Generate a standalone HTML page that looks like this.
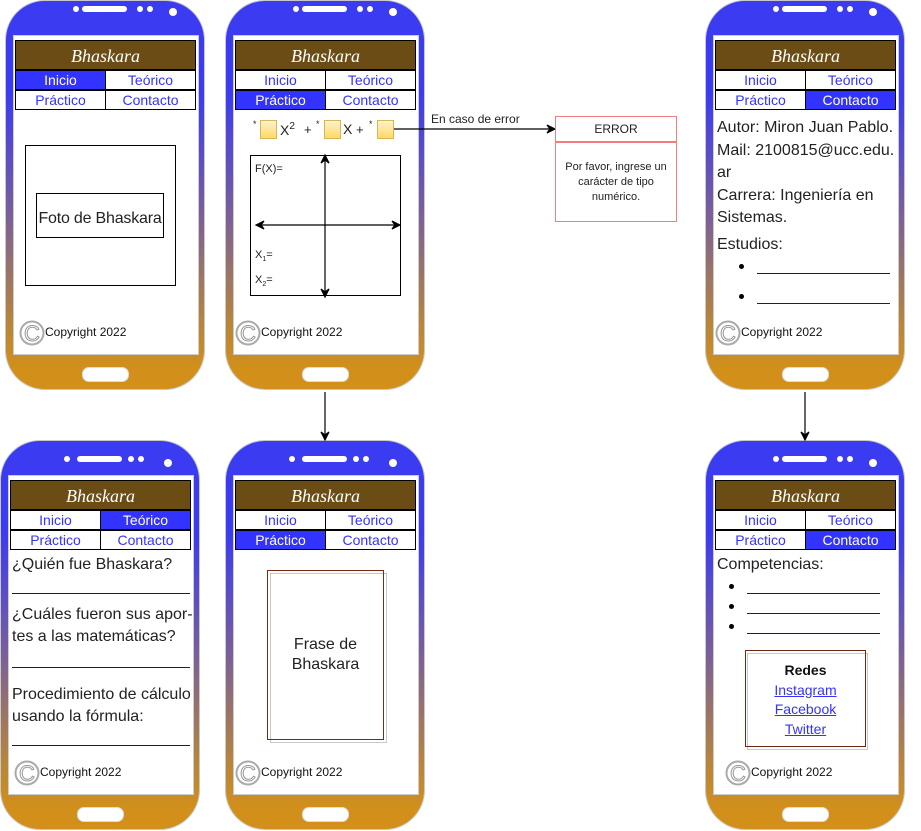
<!DOCTYPE html>
<html><head><meta charset="utf-8"><style>
*{margin:0;padding:0;box-sizing:border-box}
body{width:921px;height:831px;background:#fff;position:relative;overflow:hidden;font-family:"Liberation Sans",sans-serif;color:#222}
.ph{position:absolute;width:200px;height:390px}
.bd{position:absolute;left:0;top:0;width:200px;height:390px;border-radius:40px;border:1px solid #c8c8c8;background:linear-gradient(#3b3bf2 0%,#3b3bf2 24%,#7a5f9a 55%,#b5843e 82%,#d2901a 95%)}
.spk{position:absolute;left:77px;top:6px;width:45px;height:6px;border-radius:3px;background:#fff}
.dot{position:absolute;width:6px;height:6px;border-radius:50%;background:#fff}
.cam{position:absolute;left:164px;top:8px;width:8px;height:8px;border-radius:50%;background:#fff}
.scr{position:absolute;left:8px;top:35px;width:186px;height:320px;background:#fff;border:1px solid #ccc}
.home{position:absolute;left:77px;top:367px;width:47px;height:15px;border-radius:7px;background:#fff;border:1px solid #ddd}
.hd{position:absolute;left:10px;top:40px;width:181px;height:30px;background:#6b4c14;border:1px solid #000;color:#fff;font-family:"Liberation Serif",serif;font-style:italic;font-size:18px;text-align:center;line-height:30px}
.nv{position:absolute;height:20px;width:91px;border:1px solid #000;font-size:14px;line-height:18px;text-align:center;color:#3333ff;background:#fff}
.nv.a{background:#3333ff;color:#fff}
.cp{position:absolute;left:14px;top:319px;font-size:12px;line-height:26px;color:#111}
.cp svg{vertical-align:middle}
.t{position:absolute;font-size:16px;color:#222;white-space:nowrap}
.ln{position:absolute;height:1px;background:#222}
.bu{position:absolute;width:5px;height:5px;border-radius:50%;background:#000}
</style></head><body>

<div class="ph" style="left:5px;top:0">
<div class="bd"></div><div class="dot" style="left:68px;top:6px"></div><div class="spk"></div><div class="dot" style="left:132px;top:6px"></div><div class="dot" style="left:142px;top:6px"></div><div class="cam"></div>
<div class="scr"></div><div class="home"></div>
<div class="hd">Bhaskara</div>
<div class="nv a" style="left:10px;top:70px">Inicio</div><div class="nv" style="left:100px;top:70px">Teórico</div>
<div class="nv" style="left:10px;top:90px">Práctico</div><div class="nv" style="left:100px;top:90px">Contacto</div>
<div style="position:absolute;left:20px;top:145px;width:151px;height:141px;border:1px solid #000"></div>
<div style="position:absolute;left:31px;top:193px;width:128px;height:45px;border:1px solid #000"></div>
<div class="t" style="left:31px;top:210px;width:128px;text-align:center;letter-spacing:-0.2px">Foto de Bhaskara</div>
<div class="cp"><svg width="26" height="26" viewBox="0 0 26 26"><circle cx="13" cy="13" r="11.5" fill="none" stroke="#aaa" stroke-width="2"/><text x="13" y="21" font-size="22" text-anchor="middle" fill="none" stroke="#999" stroke-width="1" font-family="Liberation Sans">C</text></svg>Copyright 2022</div>
</div>

<div class="ph" style="left:225px;top:0">
<div class="bd"></div><div class="dot" style="left:68px;top:6px"></div><div class="spk"></div><div class="dot" style="left:132px;top:6px"></div><div class="dot" style="left:142px;top:6px"></div><div class="cam"></div>
<div class="scr"></div><div class="home"></div>
<div class="hd">Bhaskara</div>
<div class="nv" style="left:10px;top:70px">Inicio</div><div class="nv" style="left:100px;top:70px">Teórico</div>
<div class="nv a" style="left:10px;top:90px">Práctico</div><div class="nv" style="left:100px;top:90px">Contacto</div>
<div class="cp" style="left:10px"><svg width="26" height="26" viewBox="0 0 26 26"><circle cx="13" cy="13" r="11.5" fill="none" stroke="#aaa" stroke-width="2"/><text x="13" y="21" font-size="22" text-anchor="middle" fill="none" stroke="#999" stroke-width="1" font-family="Liberation Sans">C</text></svg>Copyright 2022</div>
</div>

<div class="ph" style="left:705px;top:0">
<div class="bd"></div><div class="dot" style="left:68px;top:6px"></div><div class="spk"></div><div class="dot" style="left:132px;top:6px"></div><div class="dot" style="left:142px;top:6px"></div><div class="cam"></div>
<div class="scr"></div><div class="home"></div>
<div class="hd">Bhaskara</div>
<div class="nv" style="left:10px;top:70px">Inicio</div><div class="nv" style="left:100px;top:70px">Teórico</div>
<div class="nv" style="left:10px;top:90px">Práctico</div><div class="nv a" style="left:100px;top:90px">Contacto</div>
<div class="cp" style="left:10px"><svg width="26" height="26" viewBox="0 0 26 26"><circle cx="13" cy="13" r="11.5" fill="none" stroke="#aaa" stroke-width="2"/><text x="13" y="21" font-size="22" text-anchor="middle" fill="none" stroke="#999" stroke-width="1" font-family="Liberation Sans">C</text></svg>Copyright 2022</div>
</div>

<div class="ph" style="left:0;top:440px">
<div class="bd"></div><div class="dot" style="left:64px;top:16px"></div><div class="spk" style="top:16px"></div><div class="dot" style="left:128px;top:16px"></div><div class="dot" style="left:138px;top:16px"></div><div class="cam" style="top:19px"></div>
<div class="scr"></div><div class="home"></div>
<div class="hd">Bhaskara</div>
<div class="nv" style="left:10px;top:70px">Inicio</div><div class="nv a" style="left:100px;top:70px">Teórico</div>
<div class="nv" style="left:10px;top:90px">Práctico</div><div class="nv" style="left:100px;top:90px">Contacto</div>
<div class="cp"><svg width="26" height="26" viewBox="0 0 26 26"><circle cx="13" cy="13" r="11.5" fill="none" stroke="#aaa" stroke-width="2"/><text x="13" y="21" font-size="22" text-anchor="middle" fill="none" stroke="#999" stroke-width="1" font-family="Liberation Sans">C</text></svg>Copyright 2022</div>
</div>

<div class="ph" style="left:225px;top:440px">
<div class="bd"></div><div class="dot" style="left:64px;top:16px"></div><div class="spk" style="top:16px"></div><div class="dot" style="left:128px;top:16px"></div><div class="dot" style="left:138px;top:16px"></div><div class="cam" style="top:19px"></div>
<div class="scr"></div><div class="home"></div>
<div class="hd">Bhaskara</div>
<div class="nv" style="left:10px;top:70px">Inicio</div><div class="nv" style="left:100px;top:70px">Teórico</div>
<div class="nv a" style="left:10px;top:90px">Práctico</div><div class="nv" style="left:100px;top:90px">Contacto</div>
<div style="position:absolute;left:45px;top:133px;width:117px;height:170px;border:1px solid #c8c8c8"></div>
<div style="position:absolute;left:42px;top:130px;width:117px;height:170px;border:1px solid #7a2a10;font-size:16px;text-align:center;padding-top:64px;line-height:20px;color:#222">Frase de<br>Bhaskara</div>
<div class="cp" style="left:10px"><svg width="26" height="26" viewBox="0 0 26 26"><circle cx="13" cy="13" r="11.5" fill="none" stroke="#aaa" stroke-width="2"/><text x="13" y="21" font-size="22" text-anchor="middle" fill="none" stroke="#999" stroke-width="1" font-family="Liberation Sans">C</text></svg>Copyright 2022</div>
</div>

<div class="ph" style="left:705px;top:440px">
<div class="bd"></div><div class="dot" style="left:68px;top:16px"></div><div class="spk" style="top:16px"></div><div class="dot" style="left:132px;top:16px"></div><div class="dot" style="left:142px;top:16px"></div><div class="cam" style="top:19px"></div>
<div class="scr"></div><div class="home"></div>
<div class="hd">Bhaskara</div>
<div class="nv" style="left:10px;top:70px">Inicio</div><div class="nv" style="left:100px;top:70px">Teórico</div>
<div class="nv" style="left:10px;top:90px">Práctico</div><div class="nv a" style="left:100px;top:90px">Contacto</div>
<div style="position:absolute;left:42px;top:213px;width:121px;height:97px;border:1px solid #c8c8c8"></div>
<div style="position:absolute;left:40px;top:210px;width:121px;height:97px;border:1px solid #6b2a10;text-align:center;font-size:14px;line-height:19.5px;padding-top:10px">
<b style="color:#111">Redes</b><br><u style="color:#3333ff">Instagram</u><br><u style="color:#3333ff">Facebook</u><br><u style="color:#3333ff">Twitter</u></div>
<div class="cp" style="left:20px"><svg width="26" height="26" viewBox="0 0 26 26"><circle cx="13" cy="13" r="11.5" fill="none" stroke="#aaa" stroke-width="2"/><text x="13" y="21" font-size="22" text-anchor="middle" fill="none" stroke="#999" stroke-width="1" font-family="Liberation Sans">C</text></svg>Copyright 2022</div>
</div>

<!-- P2 content -->
<div style="position:absolute;font-size:9px;left:253px;top:119px">*</div>
<div style="position:absolute;left:260px;top:120px;width:17px;height:19px;background:linear-gradient(#fff2cc,#ffd966);border:1px solid #d6b656"></div>
<div class="t" style="left:280px;top:121px;font-size:14px">X<sup style="font-size:10px;vertical-align:6px">2</sup></div>
<div class="t" style="left:304px;top:122px;font-size:13px">+</div>
<div style="position:absolute;font-size:9px;left:316px;top:119px">*</div>
<div style="position:absolute;left:324px;top:120px;width:17px;height:19px;background:linear-gradient(#fff2cc,#ffd966);border:1px solid #d6b656"></div>
<div class="t" style="left:343px;top:121px;font-size:14px">X</div>
<div class="t" style="left:356px;top:122px;font-size:13px">+</div>
<div style="position:absolute;font-size:9px;left:369px;top:119px">*</div>
<div style="position:absolute;left:377px;top:120px;width:17px;height:19px;background:linear-gradient(#fff2cc,#ffd966);border:1px solid #d6b656"></div>
<div style="position:absolute;left:250px;top:155px;width:151px;height:141px;border:1px solid #000"></div>
<div class="t" style="left:255px;top:163px;font-size:11px">F(X)=</div>
<div class="t" style="left:255px;top:249px;font-size:11px">X<sub style="font-size:7px">1</sub>=</div>
<div class="t" style="left:255px;top:274px;font-size:11px">X<sub style="font-size:7px">2</sub>=</div>
<svg style="position:absolute;left:0;top:0" width="921" height="831">
<g stroke="#000" stroke-width="1.2" fill="#000">
<line x1="325" y1="158" x2="325" y2="294"/><polygon points="325,155 321,163 325,160 329,163"/><polygon points="325,297 321,289 325,292 329,289"/>
<line x1="258" y1="225" x2="398" y2="225"/><polygon points="256,225 264,221 261,225 264,229"/><polygon points="400,225 392,221 395,225 392,229"/>
<line x1="394" y1="129" x2="552" y2="129"/><polygon points="555,129 547,125 550,129 547,133"/>
<line x1="325" y1="392" x2="325" y2="436"/><polygon points="325,440 321,432 325,435 329,432"/>
<line x1="805" y1="392" x2="805" y2="436"/><polygon points="805,440 801,432 805,435 809,432"/>
</g></svg>
<div class="t" style="left:431px;top:112px;font-size:12px">En caso de error</div>
<div style="position:absolute;left:555px;top:116px;width:122px;height:106px;border:1px solid #f37c7c;font-size:11px;text-align:center">
<div style="height:26px;line-height:25px;border-bottom:2px solid #f37c7c;font-size:12px">ERROR</div>
<div style="padding-top:17px;line-height:15px">Por favor, ingrese un carácter de tipo numérico.</div></div>

<!-- P3 content -->
<div class="t" style="left:717px;top:117px;line-height:22.5px">Autor: Miron Juan Pablo.<br>Mail: 2100815@ucc.edu.<br>ar<br>Carrera: Ingeniería en<br>Sistemas.</div>
<div class="t" style="left:717px;top:236px">Estudios:</div>
<div class="bu" style="left:739px;top:264px"></div><div class="ln" style="left:757px;top:273px;width:133px"></div>
<div class="bu" style="left:739px;top:294px"></div><div class="ln" style="left:757px;top:303px;width:133px"></div>

<!-- P4 content -->
<div class="t" style="left:12px;top:556px">¿Quién fue Bhaskara?</div>
<div class="ln" style="left:12px;top:593px;width:178px"></div>
<div class="t" style="left:12px;top:604px;line-height:22px">¿Cuáles fueron sus apor-<br>tes a las matemáticas?</div>
<div class="ln" style="left:12px;top:667px;width:178px"></div>
<div class="t" style="left:12px;top:684px;line-height:22px">Procedimiento de cálculo<br>usando la fórmula:</div>
<div class="ln" style="left:12px;top:745px;width:178px"></div>

<!-- P6 content -->
<div class="t" style="left:717px;top:556px">Competencias:</div>
<div class="bu" style="left:729px;top:584px"></div><div class="ln" style="left:747px;top:593px;width:133px"></div>
<div class="bu" style="left:729px;top:604px"></div><div class="ln" style="left:747px;top:613px;width:133px"></div>
<div class="bu" style="left:729px;top:624px"></div><div class="ln" style="left:747px;top:633px;width:133px"></div>
</body></html>
